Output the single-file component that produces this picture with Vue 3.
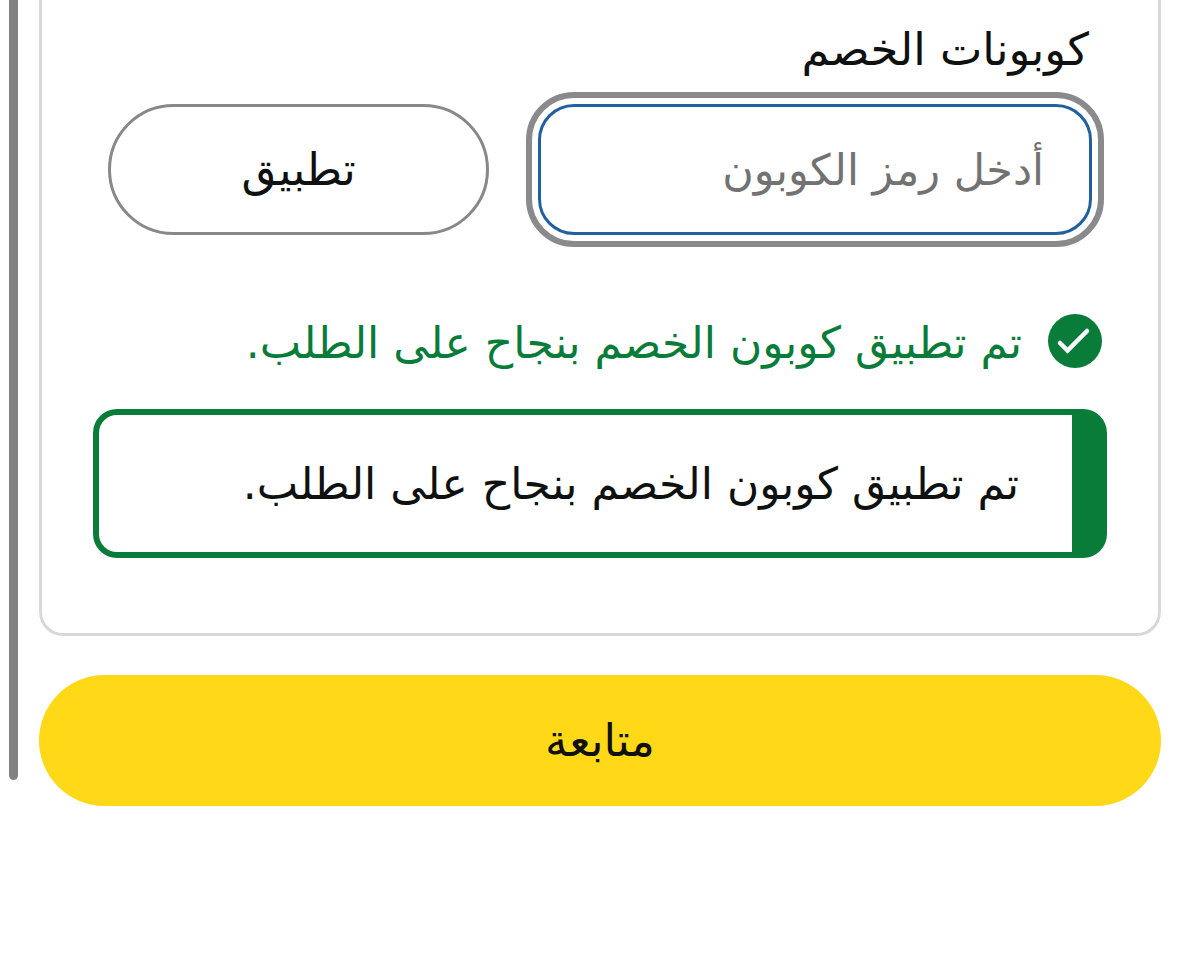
<template>
  <main class="page" dir="rtl" lang="ar">
    <div class="scrollbar"></div>
    <div class="content">
      <section class="card">
        <form class="coupon" @submit.prevent>
          <label class="coupon-label" for="coupon">كوبونات الخصم</label>
          <div class="coupon-row">
            <div class="field">
              <input id="coupon" v-model="code" type="text" placeholder="أدخل رمز الكوبون" />
            </div>
            <button class="btn btn-apply" type="submit">تطبيق</button>
          </div>
        </form>
        <p class="success">
          <svg class="success-icon" viewBox="0 0 54 54" aria-hidden="true">
            <circle cx="27" cy="27" r="27" fill="#0a7c3a" />
            <path d="M12 29L19.5 36.5L39 17" fill="none" stroke="#fff" stroke-width="4.5" stroke-linecap="round" />
          </svg>
          <span class="success-text">{{ message }}</span>
        </p>
        <div class="alert" role="status">{{ message }}</div>
      </section>
      <button class="btn btn-continue" type="button">متابعة</button>
    </div>
  </main>
</template>

<script setup>
import { ref } from 'vue'

const code = ref('')
const message = 'تم تطبيق كوبون الخصم بنجاح على الطلب.'
</script>

<style>
body { background: #fff; }
</style>

<style scoped>
.page {
  display: flex; flex-direction: row-reverse; align-items: flex-start;
  font-family: "DejaVu Sans", sans-serif; font-size: 44px; line-height: 56px; color: #0f1111;
}
.page * { box-sizing: border-box; }
.scrollbar { width: 9px; height: 780px; margin-left: 9px; background: #828282; border-radius: 0 0 5px 5px; }
.content { flex: 1; padding: 0 39px 0 21px; }
.card {
  padding: 22px 51px 75px; border: 3px solid #d8d8d9; border-top: 0;
  border-radius: 0 0 24px 24px;
}
.coupon-label { display: block; margin-right: 18px; font-size: 45px; }
.coupon-row { display: flex; gap: 37px; margin: 14px 3px 0 15px; }
.field { flex: 576; padding: 6px; border: 6px solid #8a8a8c; border-radius: 48px; }
.field input {
  display: block; width: 100%; height: 131px; padding: 0 45px;
  border: 3px solid #2160a0; border-radius: 36px; outline: none;
  background: #fff; font: inherit; font-size: 43px; color: inherit;
}
.field input::placeholder { color: #727272; opacity: 1; overflow: visible; }
.btn { font: inherit; font-size: 45px; color: inherit; cursor: pointer; }
.btn-apply { flex: 378; height: 131px; margin-top: 12px; border: 3px solid #88888a; border-radius: 66px; background: #fff; }
.success { display: flex; align-items: center; gap: 26px; margin: 63px 5px 0; color: #0a7c3a; }
.success-icon { width: 54px; height: 54px; flex: none; }
.success-text { padding-top: 5px; }
.alert {
  margin-top: 38px; padding: 41px 53px 40px; border: 6px solid #0a7c3a;
  border-right-width: 35px; border-radius: 24px;
}
.btn-continue { display: block; width: 100%; height: 131px; margin-top: 39px; border: 0; border-radius: 66px; background: #ffd818; }
</style>
